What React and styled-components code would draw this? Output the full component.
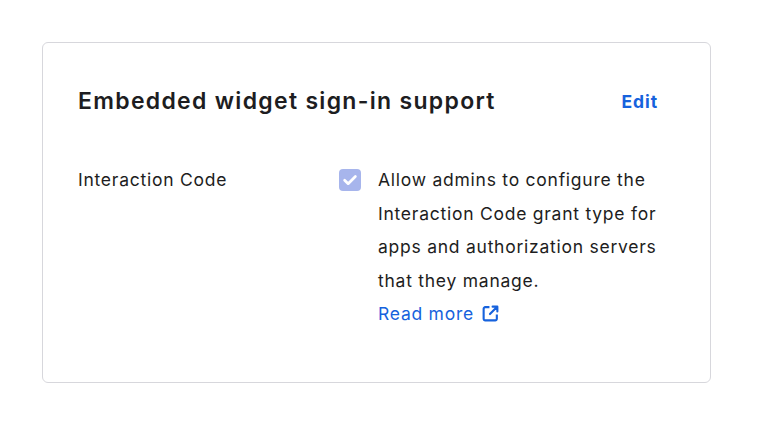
import React from 'react'
import styled, { createGlobalStyle } from 'styled-components'

const GlobalStyle = createGlobalStyle`
  body {
    margin: 0;
    background: #ffffff;
    font-family: Inter, "Noto Sans", sans-serif;
    color: #1d1d21;
  }
`

const Page = styled.div`
  padding: 42px 56px 0 42px;
`

const Card = styled.section`
  box-sizing: border-box;
  width: 669px;
  height: 341px;
  border: 1px solid #d7d7dc;
  border-radius: 6px;
  padding: 43px 52px 0 35px;
`

const Header = styled.div`
  display: flex;
  align-items: center;
  justify-content: space-between;
`

const Title = styled.h2`
  margin: 0;
  font-size: 23px;
  font-weight: 600;
  line-height: 30px;
  letter-spacing: 1.3px;
`

const EditButton = styled.button`
  border: 0;
  background: none;
  padding: 0;
  font-family: inherit;
  font-size: 17.5px;
  font-weight: 700;
  letter-spacing: 0.9px;
  color: #1662dd;
  cursor: pointer;
`

const Row = styled.div`
  display: grid;
  grid-template-columns: 244px 22px 1fr;
  column-gap: 17px;
  margin-top: 47px;
  font-size: 17.5px;
  letter-spacing: 0.75px;
`

const Label = styled.div`
  line-height: 34px;
`

const Check = styled.span`
  width: 22px;
  height: 22px;
  margin-top: 6px;
  border-radius: 4px;
  background: #a7b5ec;
  display: flex;
  align-items: center;
  justify-content: center;
`

const Description = styled.div`
  line-height: 33.5px;
  max-width: 296px;
`

const ReadMore = styled.a`
  display: inline-flex;
  align-items: center;
  gap: 7px;
  color: #1662dd;
  text-decoration: none;
`

export default function App() {
  return (
    <>
      <GlobalStyle />
      <Page>
        <Card>
          <Header>
            <Title>Embedded widget sign-in support</Title>
            <EditButton>Edit</EditButton>
          </Header>
          <Row>
            <Label>Interaction Code</Label>
            <Check>
              <svg width="16" height="16" viewBox="0 0 14 14" fill="none">
                <path d="M2.3 7.2l3.1 3 6.3-6.2" stroke="#fff" strokeWidth="2.4" strokeLinecap="round" strokeLinejoin="round" />
              </svg>
            </Check>
            <Description>
              Allow admins to configure the Interaction Code grant type for apps and authorization servers that they manage.
              <div>
                <ReadMore href="#">
                  Read more
                  <svg width="19" height="19" viewBox="0 0 18 18" fill="none">
                    <path d="M8 3H4a1.5 1.5 0 0 0-1.5 1.5v9.5A1.5 1.5 0 0 0 4 15.5h9.5A1.5 1.5 0 0 0 15 14v-4" stroke="#1662dd" strokeWidth="2" strokeLinejoin="round" />
                    <path d="M11 2.5h4.5V7M15.3 2.7L8.5 9.5" stroke="#1662dd" strokeWidth="2" strokeLinecap="round" strokeLinejoin="round" />
                  </svg>
                </ReadMore>
              </div>
            </Description>
          </Row>
        </Card>
      </Page>
    </>
  )
}
